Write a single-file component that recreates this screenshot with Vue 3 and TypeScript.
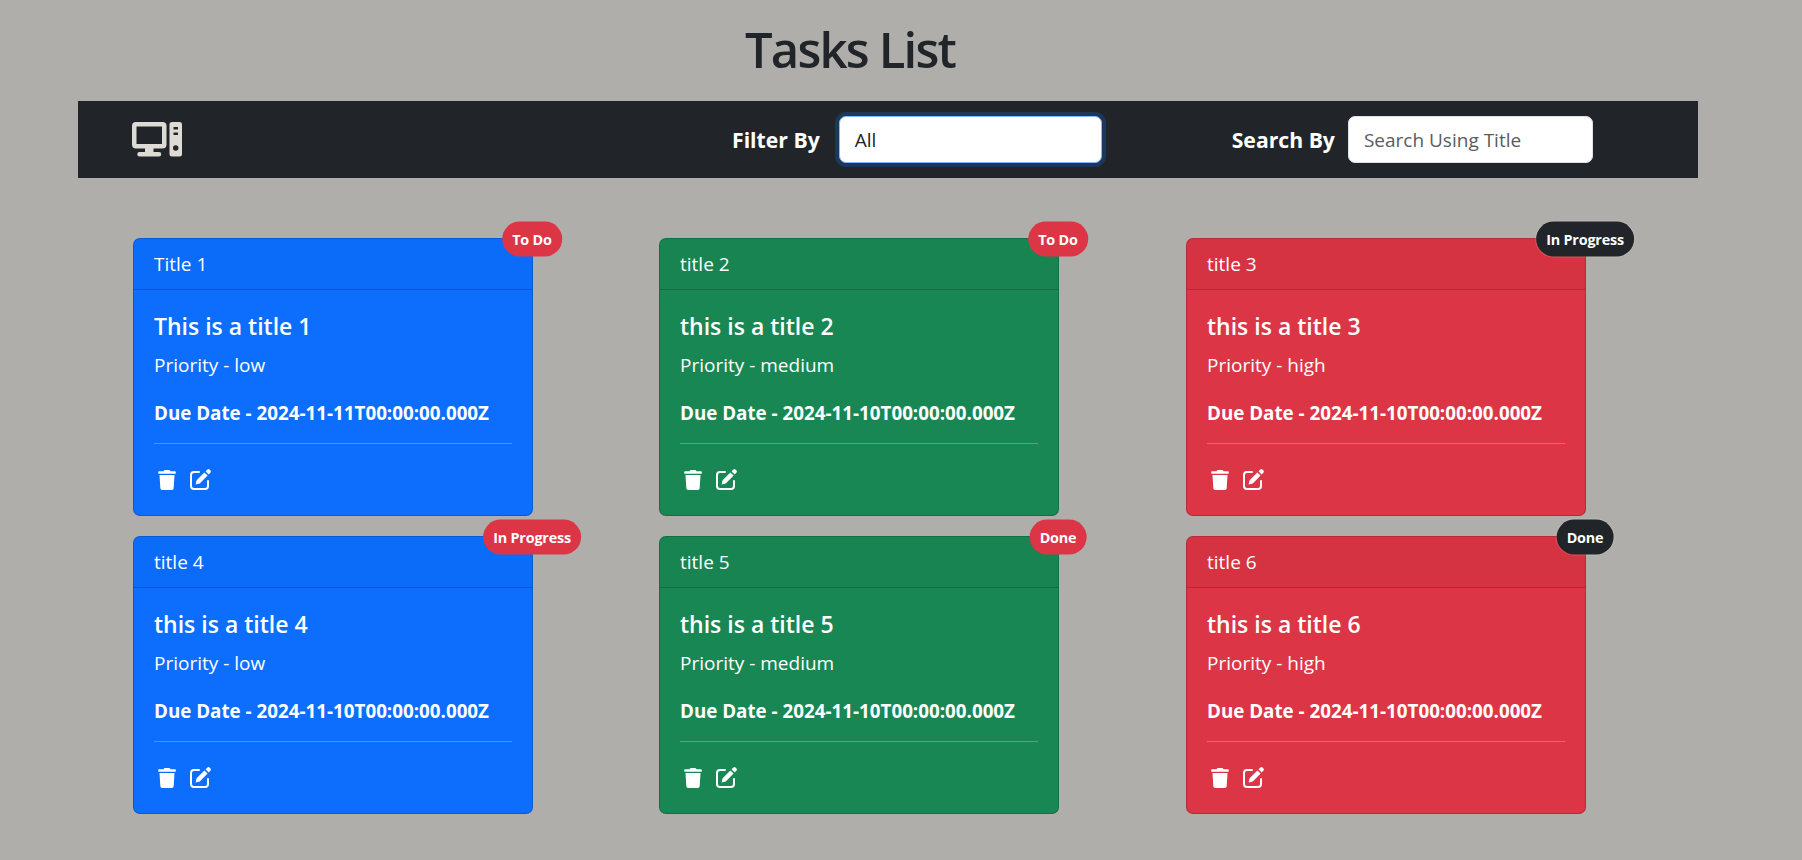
<script setup lang="ts">
interface Task {
  header: string
  title: string
  priority: string
  due: string
  status: string
  color: string
  badge: string
}

const tasks: Task[] = [
  { header: 'Title 1', title: 'This is a title 1', priority: 'low', due: '2024-11-11T00:00:00.000Z', status: 'To Do', color: 'blue', badge: 'badge-red' },
  { header: 'title 2', title: 'this is a title 2', priority: 'medium', due: '2024-11-10T00:00:00.000Z', status: 'To Do', color: 'green', badge: 'badge-red' },
  { header: 'title 3', title: 'this is a title 3', priority: 'high', due: '2024-11-10T00:00:00.000Z', status: 'In Progress', color: 'red', badge: 'badge-dark' },
  { header: 'title 4', title: 'this is a title 4', priority: 'low', due: '2024-11-10T00:00:00.000Z', status: 'In Progress', color: 'blue', badge: 'badge-red' },
  { header: 'title 5', title: 'this is a title 5', priority: 'medium', due: '2024-11-10T00:00:00.000Z', status: 'Done', color: 'green', badge: 'badge-red' },
  { header: 'title 6', title: 'this is a title 6', priority: 'high', due: '2024-11-10T00:00:00.000Z', status: 'Done', color: 'red', badge: 'badge-dark' }
]
</script>

<template>
  <div class="page">
    <h1 class="heading">Tasks List</h1>
    <nav class="navbar">
      <svg class="logo" width="51" height="36" viewBox="0 0 51 36" aria-hidden="true">
        <path fill="#dedbd5" fill-rule="evenodd" d="M4 0H30.500a4 4 0 0 1 4 4V22.500a4 4 0 0 1-4 4H21.500V30H27a2.250 2.250 0 0 1 0 4.500H7.500a2.250 2.250 0 0 1 0-4.500H13V26.500H4a4 4 0 0 1-4-4V4A4 4 0 0 1 4 0ZM4.500 4.500V22H30V4.500Z" />
        <path fill="#dedbd5" fill-rule="evenodd" d="M40 0H47.500a2.500 2.500 0 0 1 2.500 2.500V32a2.500 2.500 0 0 1-2.500 2.500H40a2.500 2.500 0 0 1-2.500-2.500V2.500A2.500 2.500 0 0 1 40 0ZM41.500 5V7.500H46V5ZM41.500 10.500V13H46V10.500ZM43.700 23.200a2.800 2.800 0 1 0 .01 0Z" />
      </svg>
      <div class="field filter">
        <label class="field-label">Filter By</label>
        <div class="control control-focus">All</div>
      </div>
      <div class="field search">
        <label class="field-label">Search By</label>
        <input class="control control-input" type="text" placeholder="Search Using Title" />
      </div>
    </nav>
    <section class="grid">
      <article v-for="task in tasks" :key="task.header" class="card" :class="task.color">
        <span class="badge" :class="task.badge">{{ task.status }}</span>
        <header class="card-header">{{ task.header }}</header>
        <div class="card-body">
          <h5 class="card-title">{{ task.title }}</h5>
          <p class="priority">Priority - {{ task.priority }}</p>
          <p class="due">Due Date - {{ task.due }}</p>
          <hr class="rule" />
          <div class="actions">
            <svg class="icon" width="18" height="20" viewBox="0 0 448 512" aria-hidden="true">
              <path fill="#fff" d="M432 32H312l-9.400-18.700A24 24 0 0 0 281.100 0H166.800a23.720 23.720 0 0 0-21.400 13.300L136 32H16A16 16 0 0 0 0 48v32a16 16 0 0 0 16 16h416a16 16 0 0 0 16-16V48a16 16 0 0 0-16-16zM53.200 467a48 48 0 0 0 47.900 45h245.800a48 48 0 0 0 47.900-45L416 128H32z" />
            </svg>
            <svg class="icon" width="21" height="21" viewBox="0 0 21 21" aria-hidden="true">
              <path fill="none" stroke="#fff" stroke-width="2" stroke-linecap="round" d="M9 3H4a3 3 0 0 0-3 3V17a3 3 0 0 0 3 3H15a3 3 0 0 0 3-3V12" />
              <path fill="#fff" d="M17.200.7a1.800 1.800 0 0 1 2.500 0l.6.6a1.800 1.800 0 0 1 0 2.500L18.700 5.500 15.500 2.300ZM14.400 3.400 17.600 6.600 9.800 14.400 5.600 15.400 6.600 11.200Z" />
            </svg>
          </div>
        </div>
      </article>
    </section>
  </div>
</template>

<style scoped>
.page {
  min-height: 860px;
  box-sizing: border-box;
  padding: 0 104px 0 78px;
  font-family: "Open Sans", "Noto Sans", sans-serif;
  color: #212529;
}

.heading {
  margin: 0 76px 0 0;
  height: 101px;
  box-sizing: border-box;
  padding-top: 19px;
  text-align: center;
  font-size: 49px;
  line-height: 60px;
  font-weight: 600;
  letter-spacing: -1.8px;
}

.navbar {
  display: flex;
  align-items: center;
  height: 77px;
  padding-left: 54px;
  background: #212529;
}

.logo {
  flex: none;
}

.field {
  display: flex;
  align-items: center;
}

.filter {
  margin-left: 549px;
  gap: 19px;
}

.search {
  margin-left: 130px;
  gap: 13px;
}

.field-label {
  color: #fff;
  font-size: 21.200px;
  font-weight: 700;
  white-space: nowrap;
}

.control {
  box-sizing: border-box;
  height: 47px;
  border-radius: 7px;
  background: #fff;
  border: 1px solid #dee2e6;
  font-family: inherit;
  font-size: 19px;
  color: #212529;
  padding: 0 15px;
  display: flex;
  align-items: center;
}

.control-focus {
  width: 263px;
  border-color: #86b7fe;
  box-shadow: 0 0 0 4px rgba(13, 110, 253, 0.25);
}

.control-input {
  width: 245px;
  outline: none;
}

.control-input::placeholder {
  color: #595c5f;
  opacity: 1;
}

.grid {
  display: grid;
  grid-template-columns: 400px 401px 400px;
  justify-items: start;
  column-gap: 126px;
  row-gap: 20px;
  margin: 60px 0 0 55px;
}

.card {
  position: relative;
  box-sizing: border-box;
  width: 400px;
  height: 278px;
  border: 1px solid rgba(0, 0, 0, 0.175);
  border-radius: 7px;
  color: #fff;
}

.blue {
  background-color: #0d6efd;
}

.green {
  background-color: #198754;
}

.red {
  background-color: #dc3545;
}

.badge {
  position: absolute;
  left: 100%;
  top: 0;
  transform: translate(-50%, -50%);
  padding: 0 10px;
  height: 35px;
  display: flex;
  align-items: center;
  border-radius: 18px;
  font-size: 14.400px;
  font-weight: 700;
  letter-spacing: -0.2px;
  white-space: nowrap;
  color: #fff;
}

.badge-red {
  background: #dc3545;
}

.badge-dark {
  background: #212529;
  box-shadow: 0 0 0 1px rgba(255, 255, 255, 0.15);
}

.card-header {
  box-sizing: border-box;
  height: 51px;
  padding: 0 20px;
  display: flex;
  align-items: center;
  font-size: 19px;
  background: rgba(0, 0, 0, 0.03);
  border-bottom: 1px solid rgba(0, 0, 0, 0.175);
  border-radius: 6px 6px 0 0;
}

.blue .card-header {
  background: rgba(0, 0, 0, 0.01);
}

.green .card-header {
  background: rgba(0, 0, 0, 0.02);
}

.card-body {
  padding: 23px 20px 0;
}

.card-title {
  margin: 0;
  font-size: 23px;
  line-height: 27px;
  font-weight: 600;
}

.priority {
  margin: 12px 0 0;
  font-size: 19px;
  line-height: 27px;
}

.due {
  margin: 21px 0 0;
  font-size: 18.800px;
  line-height: 27px;
  font-weight: 700;
  white-space: nowrap;
}

.rule {
  margin: 16px 0 0;
  border: 0;
  border-top: 1px solid rgba(255, 255, 255, 0.25);
}

.actions {
  display: flex;
  align-items: center;
  gap: 14px;
  margin: 25px 0 0 4px;
}

.icon {
  flex: none;
}
</style>

<style>
body {
  background: #b0aeab;
}
</style>
